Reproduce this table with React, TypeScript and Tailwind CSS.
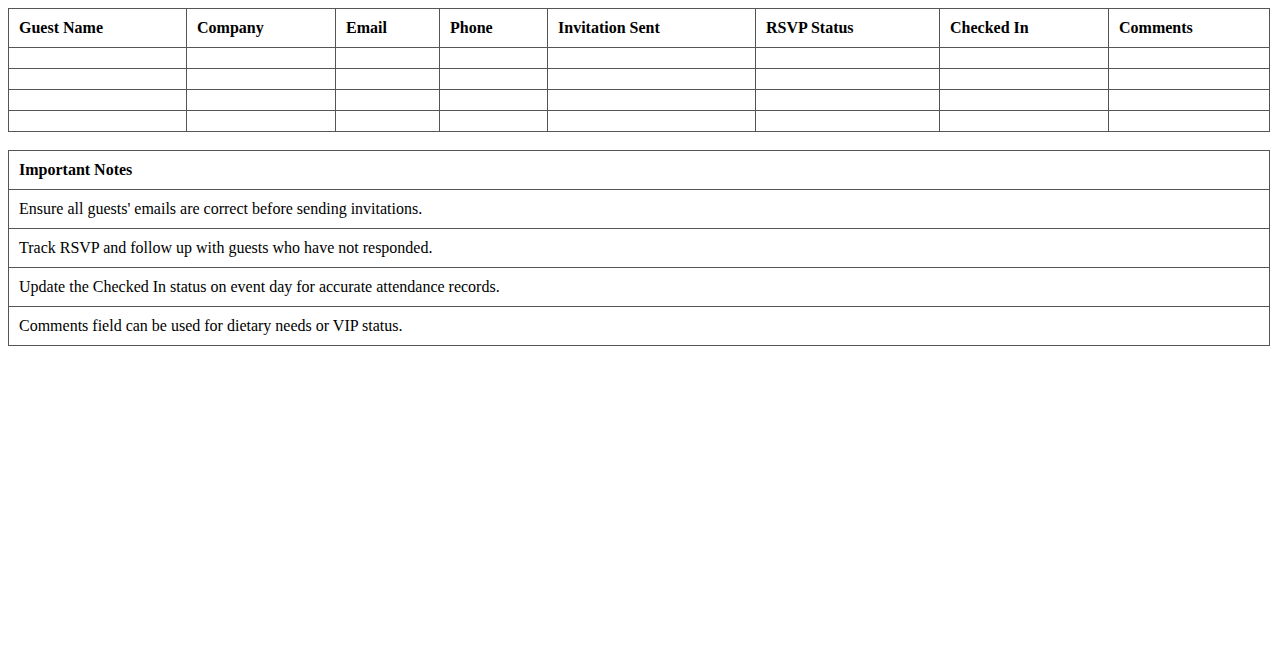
const columns = [
  { label: "Guest Name", width: "w-[178px]" },
  { label: "Company", width: "w-[149px]" },
  { label: "Email", width: "w-[104px]" },
  { label: "Phone", width: "w-[108px]" },
  { label: "Invitation Sent", width: "w-[208px]" },
  { label: "RSVP Status", width: "w-[184px]" },
  { label: "Checked In", width: "w-[169px]" },
  { label: "Comments", width: "w-[161px]" },
]

const notes = [
  "Ensure all guests' emails are correct before sending invitations.",
  "Track RSVP and follow up with guests who have not responded.",
  "Update the Checked In status on event day for accurate attendance records.",
  "Comments field can be used for dietary needs or VIP status.",
]

export default function App() {
  return (
    <div className="min-h-screen bg-white p-2 text-base text-black font-['Liberation_Serif',serif]">
      <table className="w-full table-fixed border-collapse">
        <thead>
          <tr>
            {columns.map((col) => (
              <th
                key={col.label}
                className={`${col.width} border border-[#555] p-[10px] text-left font-bold leading-[18px]`}
              >
                {col.label}
              </th>
            ))}
          </tr>
        </thead>
        <tbody>
          {[0, 1, 2, 3].map((row) => (
            <tr key={row}>
              {columns.map((col) => (
                <td key={col.label} className="h-[21px] border border-[#555] p-[10px]"></td>
              ))}
            </tr>
          ))}
        </tbody>
      </table>

      <table className="mt-[18px] w-full border-collapse">
        <thead>
          <tr>
            <th className="border border-[#555] p-[10px] text-left font-bold leading-[18px]">Important Notes</th>
          </tr>
        </thead>
        <tbody>
          {notes.map((note) => (
            <tr key={note}>
              <td className="border border-[#555] p-[10px] leading-[18px]">{note}</td>
            </tr>
          ))}
        </tbody>
      </table>
    </div>
  )
}
